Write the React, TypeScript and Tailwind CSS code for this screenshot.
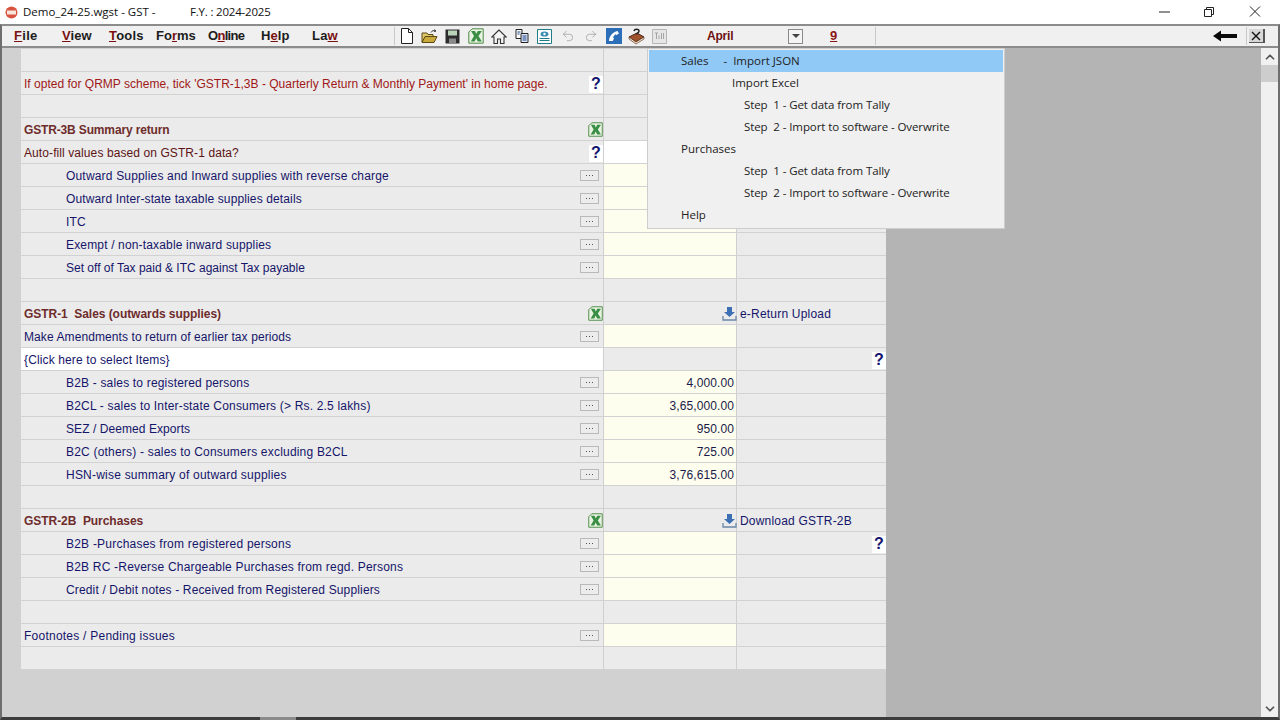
import { ChevronDown, ChevronUp, Redo2, Undo2 } from "lucide-react";

type Row = {
  label?: string;
  kind?: "red" | "maroon" | "head" | "plain" | "sub" | "click";
  track?: string;
  dots?: boolean;
  help?: boolean;
  excel?: boolean;
  mid?: "cream" | "white";
  value?: string;
  upload?: string;
  rightHelp?: boolean;
};

const rows: Row[] = [
  {},
  { label: "If opted for QRMP scheme, tick 'GSTR-1,3B - Quarterly Return & Monthly Payment' in home page.", kind: "red", track: "tracking-[0.01px]", help: true },
  {},
  { label: "GSTR-3B Summary return", kind: "head", track: "tracking-[-0.15px]", excel: true },
  { label: "Auto-fill values based on GSTR-1 data?", kind: "maroon", track: "tracking-[0.09px]", help: true, mid: "white" },
  { label: "Outward Supplies and Inward supplies with reverse charge", kind: "sub", dots: true, mid: "cream" },
  { label: "Outward Inter-state taxable supplies details", kind: "sub", track: "tracking-[0.13px]", dots: true, mid: "cream" },
  { label: "ITC", kind: "sub", dots: true, mid: "cream" },
  { label: "Exempt / non-taxable inward supplies", kind: "sub", track: "tracking-[0.16px]", dots: true, mid: "cream" },
  { label: "Set off of Tax paid & ITC against Tax payable", kind: "sub", track: "tracking-[0px]", dots: true, mid: "cream" },
  {},
  { label: "GSTR-1  Sales (outwards supplies)", kind: "head", track: "tracking-[-0.05px]", excel: true, upload: "e-Return Upload" },
  { label: "Make Amendments to return of earlier tax periods", kind: "plain", track: "tracking-[0.09px]", dots: true, mid: "cream" },
  { label: "{Click here to select Items}", kind: "click", track: "tracking-[0.13px]", rightHelp: true },
  { label: "B2B - sales to registered persons", kind: "sub", dots: true, mid: "cream", value: "4,000.00" },
  { label: "B2CL - sales to Inter-state Consumers (> Rs. 2.5 lakhs)", kind: "sub", dots: true, mid: "cream", value: "3,65,000.00" },
  { label: "SEZ / Deemed Exports", kind: "sub", track: "tracking-[0.07px]", dots: true, mid: "cream", value: "950.00" },
  { label: "B2C (others) - sales to Consumers excluding B2CL", kind: "sub", track: "tracking-[0.2px]", dots: true, mid: "cream", value: "725.00" },
  { label: "HSN-wise summary of outward supplies", kind: "sub", track: "tracking-[0.22px]", dots: true, mid: "cream", value: "3,76,615.00" },
  {},
  { label: "GSTR-2B  Purchases", kind: "head", track: "tracking-[-0.05px]", excel: true, upload: "Download GSTR-2B" },
  { label: "B2B -Purchases from registered persons", kind: "sub", track: "tracking-[0.22px]", dots: true, mid: "cream", rightHelp: true },
  { label: "B2B RC -Reverse Chargeable Purchases from regd. Persons", kind: "sub", track: "tracking-[0.2px]", dots: true, mid: "cream" },
  { label: "Credit / Debit notes - Received from Registered Suppliers", kind: "sub", track: "tracking-[0.15px]", dots: true, mid: "cream" },
  {},
  { label: "Footnotes / Pending issues", kind: "plain", track: "tracking-[0.24px]", dots: true, mid: "cream" },
  {},
];

const labelClass: Record<string, string> = {
  red: "pl-[3px] text-[#a01818]",
  maroon: "pl-[3px] text-[#5c1414]",
  head: "pl-[3px] font-bold text-[#6e2c2c]",
  plain: "pl-[3px] text-[#15156a]",
  sub: "pl-[45px] text-[#15156a]",
  click: "pl-[3px] text-[#15156a]",
};

const ExcelIcon = ({ size = 15 }: { size?: number }) => (
  <svg width={size} height={size} viewBox="0 0 16 16" className="shrink-0">
    <path d="M.8 4 4 .8h11.200v14.400H.8z" fill="#e8f3e2" stroke="#4f8a45" />
    <path d="M3 3h4l1.300 2.800L9.800 3h4L10.500 8l3.300 5.400H9.800L8.200 10.200 6.600 13.400H2.800L6 8z" fill="#3a8f45" />
  </svg>
);

const Help = () => (
  <span className="flex h-[17px] w-[14px] translate-y-[1px] items-center justify-center bg-white text-[16px] font-bold leading-none text-[#14146e]">?</span>
);

const Dots = () => (
  <span className="flex h-[11px] w-[19px] items-center justify-center gap-[2px] border border-[#b9b9b9] bg-[#ececec]">
    <i className="h-px w-px bg-[#555]" />
    <i className="h-px w-px bg-[#555]" />
    <i className="h-px w-px bg-[#555]" />
  </span>
);

const DownloadIcon = () => (
  <svg width="15" height="15" viewBox="0 0 15 15" className="mr-[-3px] shrink-0">
    <path d="M5 1h5v5h3L7.500 11 2 6h3z" fill="#3d6fb5" />
    <path d="M1 10v4h13v-4" fill="none" stroke="#6c86a8" strokeWidth="1.300" />
  </svg>
);

const GridRow = ({ row }: { row: Row }) => {
  const mid = row.mid === "cream" ? "bg-[#fefeee]" : row.mid === "white" ? "bg-white" : "";
  const track = row.track ?? "tracking-[0.18px]";
  return (
    <div className="grid h-[23px] grid-cols-[583px_133px_149px] border-b border-[#d2d2d2] text-[12px] leading-[22px]">
      <div className={`flex items-center justify-between border-r border-[#cfcfcf] ${row.kind === "click" ? "bg-white" : ""}`}>
        <span className={`translate-y-[1px] whitespace-pre ${track} ${row.kind ? labelClass[row.kind] : ""}`}>{row.label}</span>
        {row.dots && <span className="mr-[4px]"><Dots /></span>}
        {row.help && <Help />}
        {row.excel && <ExcelIcon />}
      </div>
      <div className={`flex items-center justify-end border-r border-[#cfcfcf] pr-[2px] tracking-[0.1px] text-[#1a1a4a] ${mid}`}>
        {row.value && <span className="translate-y-[1px]">{row.value}</span>}
        {row.upload && <DownloadIcon />}
      </div>
      <div className="flex items-center justify-between pl-[3px] tracking-[0.2px] text-[#15156a]">
        <span className="translate-y-[1px]">{row.upload}</span>
        {row.rightHelp && <span className="ml-auto"><Help /></span>}
      </div>
    </div>
  );
};

const Letter = ({ text, at }: { text: string; at: number }) => (
  <>
    {text.slice(0, at)}
    <span className="text-[#7a1010] underline decoration-[#7a1010]">{text[at]}</span>
    {text.slice(at + 1)}
  </>
);

const menus = [
  { text: "File", at: 0, box: "w-[48px]", track: "tracking-[0.3px]" },
  { text: "View", at: 0, box: "w-[47px]", track: "tracking-[0.1px]" },
  { text: "Tools", at: 0, box: "w-[47px]", track: "tracking-[0.2px]" },
  { text: "Forms", at: 2, box: "w-[52px]", track: "tracking-[0px]" },
  { text: "Online", at: 1, box: "w-[53px]", track: "tracking-[-0.7px]" },
  { text: "Help", at: 1, box: "w-[51px]", track: "tracking-[0.1px]" },
  { text: "Law", at: 2, box: "w-[40px]", track: "tracking-[0.2px]" },
];

const toolIcons = [
  <svg key="new" width="14" height="16" viewBox="0 0 14 16"><path d="M1.500.5h7l4 4v11h-11z" fill="#fff" stroke="#222" /><path d="M8.500.5v4h4" fill="none" stroke="#222" /></svg>,
  <svg key="open" width="17" height="15" viewBox="0 0 17 15"><path d="M1 13V4h5l1 1.500h5V8" fill="#e0c66a" stroke="#5a4a12" /><path d="M1 13.500 4 7.500h12l-3 6z" fill="#caa93c" stroke="#5a4a12" /><path d="M10 3.500c1-2 3-2.500 5-1.500l-1.500-1.500M15 2l-2 .5" fill="none" stroke="#3a3a3a" /></svg>,
  <svg key="save" width="15" height="15" viewBox="0 0 15 15"><path d="M.5.5h14v14H.5z" fill="#2c2c2c" /><path d="M3 1.500h9v5H3z" fill="#b9d3b9" /><path d="M4 9.500h7v5H4z" fill="#8a8a8a" /></svg>,
  <ExcelIcon key="xl" size={16} />,
  <svg key="home" width="16" height="15" viewBox="0 0 16 15"><path d="M8 1 .8 8h2.200v6.500h3.500V10h3v4.500H13V8h2.200z" fill="#f4f4f4" stroke="#333" strokeWidth="1.100" /></svg>,
  <svg key="copy" width="14" height="14" viewBox="0 0 14 14"><path d="M1 .5h6v9H1z" fill="#fff" stroke="#222" /><path d="M6 4.500h7v9H6z" fill="#dfe8f5" stroke="#222" /><path d="M7.500 7h4M7.500 9h4M7.500 11h4M2.500 3h3M2.500 5h2" stroke="#1d3f8a" /></svg>,
  <svg key="view" width="15" height="15" viewBox="0 0 15 15"><path d="M.5.5h14v14H.5z" fill="#fff" stroke="#1f7d8a" /><ellipse cx="7.500" cy="5" rx="4" ry="2.600" fill="#3a8fb0" /><circle cx="7.500" cy="5" r="1.200" fill="#fff" /><path d="M2.500 9.500h10M2.500 11.500h10" stroke="#1f7d8a" /></svg>,
  <Undo2 key="undo" size={14} strokeWidth={1.5} className="text-[#a8a8a8]" />,
  <Redo2 key="redo" size={14} strokeWidth={1.5} className="text-[#a8a8a8]" />,
  <svg key="phone" width="16" height="16" viewBox="0 0 16 16"><path d="M0 0h16v16H0z" fill="#2c6fb8" /><path d="M3 13c0-5 4-9 8.500-10l1.500 2.500-2.500 1.500-1-.8c-1 .8-2 2-2.500 3.300l1 .8L6.800 13z" fill="#fff" /></svg>,
  <svg key="book" width="17" height="17" viewBox="0 0 17 17"><path d="M1 9l8-4 7 4-8 5z" fill="#a0522d" stroke="#4a2412" /><path d="M1 9v2l7 5 8-5V9l-8 5z" fill="#f1e3c8" stroke="#4a2412" strokeWidth=".6" /><path d="M6 3c.5-2.500 5-2.500 5 0 0 2-2.500 2-2.500 3.500" fill="none" stroke="#222" strokeWidth="1.500" /></svg>,
  <svg key="tally" width="15" height="15" viewBox="0 0 15 15"><path d="M.5.5h14v14H.5z" fill="#e6e6e6" stroke="#b5b5b5" /><path d="M3 4h3M4.500 4v6M7 6.500v3.500M9.500 4v6M11.500 4v6" stroke="#a5a5a5" /></svg>,
];

const popup: { text: string; pad: string; active?: boolean; step?: boolean }[] = [
  { text: "Sales     -  Import JSON", pad: "pl-[32px]", active: true },
  { text: "Import Excel", pad: "pl-[83px]" },
  { text: "Step  1 - Get data from Tally", pad: "pl-[95px]", step: true },
  { text: "Step  2 - Import to software - Overwrite", pad: "pl-[95px]", step: true },
  { text: "Purchases", pad: "pl-[32px]" },
  { text: "Step  1 - Get data from Tally", pad: "pl-[95px]", step: true },
  { text: "Step  2 - Import to software - Overwrite", pad: "pl-[95px]", step: true },
  { text: "Help", pad: "pl-[32px]" },
];

export default function App() {
  return (
    <div className="relative flex h-screen w-[1280px] flex-col overflow-hidden bg-white font-['Liberation_Sans',sans-serif]">
      {/* Title bar */}
      <div className="flex h-[24px] shrink-0 items-center bg-white pl-[5px] font-['Open_Sans',sans-serif] text-[11.500px] text-[#111]">
        <svg width="13" height="13" viewBox="0 0 13 13">
          <circle cx="6.500" cy="6.500" r="6" fill="#d9523f" />
          <rect x="2" y="4.500" width="9" height="4" fill="#f8e6dc" />
        </svg>
        <span className="ml-[5px] w-[167px] whitespace-pre">Demo_24-25.wgst - GST -</span>
        <span className="tracking-[-0.2px]">F.Y. : 2024-2025</span>
        <div className="ml-auto flex items-center text-[#222]">
          <svg width="46" height="14" viewBox="0 0 46 14"><path d="M2 7h11" stroke="#222" /></svg>
          <svg width="46" height="14" viewBox="0 0 46 14"><path d="M1.500 4.500h7v7h-7zM3.500 4.500v-2h7v7h-2" fill="none" stroke="#222" /></svg>
          <svg width="31" height="14" viewBox="0 0 31 14"><path d="M1 1.500l10 10M11 1.500l-10 10" stroke="#222" /></svg>
        </div>
      </div>

      {/* Window frame */}
      <div className="flex min-h-0 flex-1 flex-col border-x-2 border-t-2 border-b-[3px] border-x-[#6e6e6e] border-t-[#8c8c8c] border-b-[#3c3c3c]">
        {/* Menu bar */}
        <div className="flex h-[22px] shrink-0 items-center border-b-2 border-[#8c8c8c] bg-[#f0f0f0]">
          <div className="flex w-[392px] items-center pl-[12px] text-[13px] font-bold text-[#1c1c1c]">
            {menus.map((m) => (
              <span key={m.text} className={`${m.box} ${m.track} shrink-0`}>
                <Letter text={m.text} at={m.at} />
              </span>
            ))}
          </div>
          <span className="h-[18px] w-px bg-[#c8c8c8]" />
          <div className="flex items-center">
            {toolIcons.map((icon, i) => (
              <span key={i} className="flex h-[20px] w-[23px] items-center justify-center">{icon}</span>
            ))}
          </div>
          <span className="ml-[36px] w-[81px] text-[12px] font-bold tracking-[-0.2px] text-[#6e1010]">April</span>
          <span className="flex h-[15px] w-[15px] items-center justify-center border border-[#8a8a8a] bg-[#f4f4f4]">
            <i className="h-0 w-0 border-x-[4px] border-t-[4px] border-x-transparent border-t-[#444]" />
          </span>
          <span className="ml-[27px] text-[13px] font-bold text-[#8c1616] underline">9</span>
          <span className="ml-[38px] h-[18px] w-px bg-[#c8c8c8]" />
          <svg width="24" height="12" viewBox="0 0 24 12" className="ml-[337px]">
            <path d="M0 6 8 .5V4h16v4H8v3.500z" fill="#0a0a0a" />
          </svg>
          <span className="ml-[9px] h-[18px] w-px bg-[#c8c8c8]" />
          <span className="ml-[2px] flex h-[14px] w-[16px] items-center justify-center border-r-2 border-b border-[#555] bg-[#d8d8d8]">
            <svg width="10" height="10" viewBox="0 0 10 10"><path d="M1 1l8 8M9 1l-8 8" stroke="#111" strokeWidth="1.400" /></svg>
          </span>
        </div>

        {/* Body */}
        <div className="flex min-h-0 flex-1">
          <div className="flex flex-1 bg-[#b4b4b4]">
            <div className="w-[884px] bg-[#d1d1d1] pl-[19px] pt-[1px]">
              <div className="bg-[#ebebeb]">
                {rows.map((row, i) => (
                  <GridRow key={i} row={row} />
                ))}
              </div>
            </div>
          </div>
          {/* Scrollbar */}
          <div className="flex w-[17px] flex-col items-center bg-[#f0f0f0]">
            <ChevronUp size={14} strokeWidth={3} className="mt-[2px] text-[#555]" />
            <span className="mt-[1px] h-[17px] w-full bg-[#cdcdcd]" />
            <ChevronDown size={14} strokeWidth={3} className="mb-[1px] mt-auto text-[#555]" />
          </div>
        </div>
      </div>
      <span className="absolute bottom-0 left-[260px] h-[3px] w-[36px] bg-[#8a8a8a]" />

      {/* Dropdown popup */}
      <div className="absolute left-[647px] top-[48px] h-[181px] w-[358px] border border-[#cdcdcd] bg-[#f0f0f0] px-[1px] pt-[1px] font-['Open_Sans',sans-serif] text-[11.500px] text-[#222]">
        {popup.map((p) => (
          <div
            key={p.text + p.pad}
            className={`h-[22px] whitespace-pre leading-[22px] ${p.pad} ${p.step ? "tracking-[-0.09px]" : ""} ${p.active ? "bg-[#90c8f6]" : ""}`}
          >
            {p.text}
          </div>
        ))}
      </div>
    </div>
  );
}
